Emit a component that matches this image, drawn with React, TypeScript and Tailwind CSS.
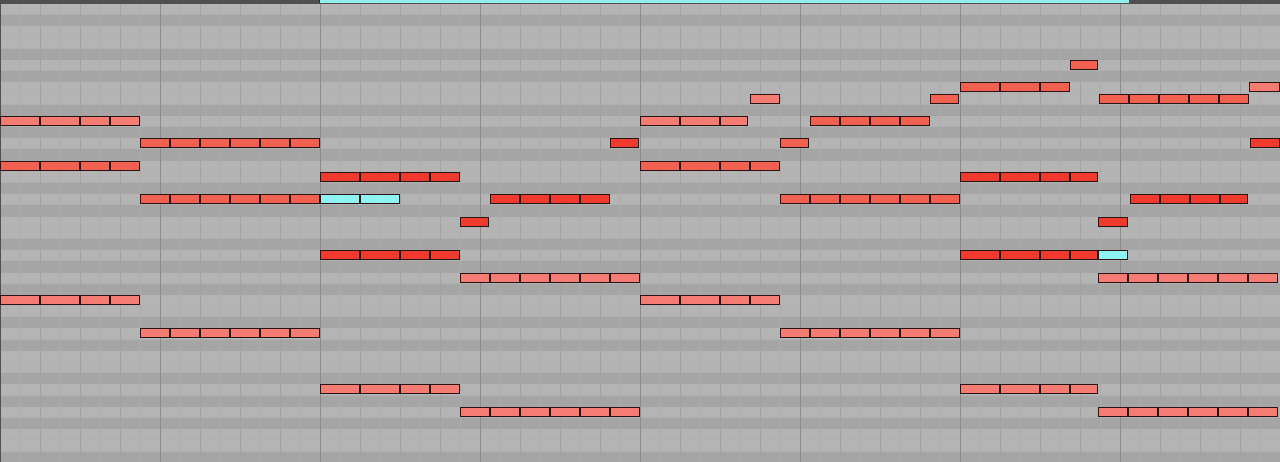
const ROWS = 41;
const DARK_ROWS = new Set([1, 4, 6, 9, 11, 13, 16, 18, 21, 23, 25, 28, 30, 33, 35, 37, 40]);

type Tone = "light" | "mid" | "dark" | "sel";

const TONE: Record<Tone, string> = {
  light: "bg-[#f47c73]",
  mid: "bg-[#f2604f]",
  dark: "bg-[#ef3b2d]",
  sel: "bg-[#8ef3f3]",
};

type Note = { row: number; x: number; w: number; tone: Tone };

const A = [40, 40, 30, 30];
const B = [30, 30, 30, 30, 30, 30];
const C = [30, 30, 30, 30];

// a run of notes laid end to end on one pitch
function run(row: number, x: number, widths: number[], tone: Tone): Note[] {
  const out: Note[] = [];
  let pos = x;
  for (const w of widths) {
    out.push({ row, x: pos, w, tone });
    pos += w;
  }
  return out;
}

const NOTES: Note[] = [
  ...run(5, 1070, [28], "mid"),
  ...run(7, 960, [40, 40, 30], "mid"),
  ...run(7, 1249, [31], "light"),
  ...run(8, 750, [30], "light"),
  ...run(8, 930, [29], "mid"),
  ...run(8, 1099, [30, 30, 30, 30, 30], "mid"),
  ...run(10, 0, A, "light"),
  ...run(10, 640, [40, 40, 28], "light"),
  ...run(10, 810, C, "mid"),
  ...run(12, 140, B, "mid"),
  ...run(12, 610, [29], "dark"),
  ...run(12, 780, [29], "mid"),
  ...run(12, 1250, [30], "dark"),
  ...run(14, 0, A, "mid"),
  ...run(14, 640, A, "mid"),
  ...run(15, 320, A, "dark"),
  ...run(15, 960, [40, 40, 30, 28], "dark"),
  ...run(17, 140, B, "mid"),
  ...run(17, 320, [40, 40], "sel"),
  ...run(17, 490, C, "dark"),
  ...run(17, 780, B, "mid"),
  ...run(17, 1130, [30, 30, 30, 28], "dark"),
  ...run(19, 460, [29], "dark"),
  ...run(19, 1098, [30], "dark"),
  ...run(22, 320, A, "dark"),
  ...run(22, 960, [40, 40, 30, 28], "dark"),
  ...run(22, 1098, [30], "sel"),
  ...run(24, 460, B, "light"),
  ...run(24, 1098, B, "light"),
  ...run(26, 0, A, "light"),
  ...run(26, 640, A, "light"),
  ...run(29, 140, B, "light"),
  ...run(29, 780, B, "light"),
  ...run(34, 320, A, "light"),
  ...run(34, 960, [40, 40, 30, 28], "light"),
  ...run(36, 460, B, "light"),
  ...run(36, 1098, B, "light"),
];

function lineClass(i: number) {
  if (i % 8 === 0) return "border-[#8c8c8c]";
  if (i % 2 === 0) return "border-[#a2a2a2]";
  return "border-[#acacac]";
}

export default function App() {
  const rows = Array.from({ length: ROWS }, (_, r) => r);
  const cols = Array.from({ length: 64 }, (_, i) => i);

  return (
    <div className="w-[1280px] h-[462px] overflow-hidden bg-[#b3b3b3] flex flex-col">
      {/* loop brace */}
      <div className="h-[4px] shrink-0 bg-[#4f4f4f] flex">
        <div className="w-[319px]" />
        <div className="w-[810px] h-[3px] bg-[#93efee] border-l border-[#2a2a2a]" />
      </div>

      <div className="relative flex-1">
        {/* key rows */}
        <div className="flex flex-col">
          {rows.map((r) => (
            <div
              key={r}
              className={`h-[11.2px] shrink-0 ${
                DARK_ROWS.has(r) ? "bg-[#a5a5a5]" : "bg-[#b4b4b4] border-b border-[#b0b0b0]"
              }`}
            />
          ))}
        </div>

        {/* grid lines */}
        <div className="absolute inset-0 flex">
          {cols.map((i) => (
            <div key={i} className={`w-[20px] h-full shrink-0 border-l ${lineClass(i)}`} />
          ))}
        </div>
        <div className="absolute left-0 top-0 bottom-0 w-px bg-[#505050]" />

        {/* notes */}
        <div className="absolute inset-0 flex flex-col">
          {rows.map((r) => (
            <div key={r} className="relative h-[11.2px] shrink-0">
              {NOTES.filter((n) => n.row === r).map((n) => (
                <div
                  key={n.x}
                  className={`absolute top-0 h-[10px] border border-[#2b1414] ${TONE[n.tone]}`}
                  style={{ left: n.x, width: n.w }}
                />
              ))}
            </div>
          ))}
        </div>
      </div>
    </div>
  );
}
